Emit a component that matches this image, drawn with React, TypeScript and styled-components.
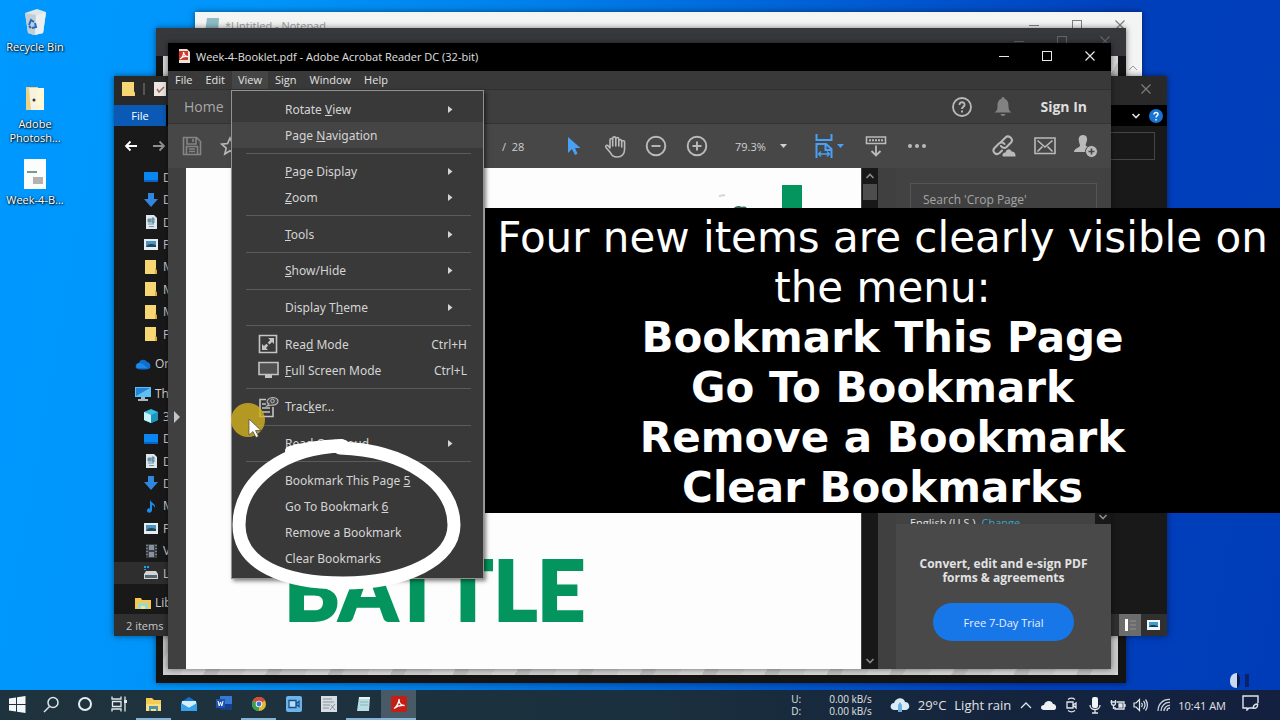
import React from 'react';
import styled, { createGlobalStyle } from 'styled-components';

const GlobalStyle = createGlobalStyle`
  * {
    box-sizing: border-box;
  }
  body {
    margin: 0;
    font-family: "Open Sans", "Noto Sans", sans-serif;
    font-size: 12px;
    color: #e2e2e2;
  }
  button, input, select {
    font-family: inherit;
    font-size: inherit;
    color: inherit;
    background: none;
    border: none;
    padding: 0;
    margin: 0;
  }
`;

const Screen = styled.div`
  height: 100vh;
  display: flex;
  flex-direction: column;
  overflow: hidden;
  background: linear-gradient(100deg, #0099ff 0%, #0095fa 18%, #0080ea 38%, #0057cf 64%, #0040bd 80%, #003cb8 100%);
`;

const Desktop = styled.main`
  flex: 1;
  position: relative;
`;

const Shortcuts = styled.div`
  display: flex;
  flex-direction: column;
  width: 70px;
  padding-top: 8px;
`;

const Shortcut = styled.button<{ $gap?: number }>`
  display: flex;
  flex-direction: column;
  align-items: center;
  gap: 4px;
  margin-bottom: ${(p) => p.$gap || 0}px;
  font-size: 11px;
  line-height: 14px;
  color: #fff;
  text-shadow: 1px 1px 2px #000, 0 0 2px #000;
`;

/* windows */

const Win = styled.section<{ $top: number; $right: number; $bottom: number; $left: number; $bg: string }>`
  position: absolute;
  top: ${(p) => p.$top}px;
  right: ${(p) => p.$right}px;
  bottom: ${(p) => p.$bottom}px;
  left: ${(p) => p.$left}px;
  display: flex;
  flex-direction: column;
  background: ${(p) => p.$bg};
  box-shadow: 0 0 6px rgba(0, 0, 0, 0.5);
`;

const NotepadTitle = styled.div`
  display: flex;
  align-items: center;
  gap: 6px;
  height: 26px;
  padding: 0 1px 0 10px;
  background: #f3f4f4;
  color: #9a9a9a;
  font-size: 11px;
`;

const NotepadEdge = styled.div`
  display: flex;
  justify-content: flex-end;
  padding: 26px 4px;
`;

const Push = styled.div`
  flex: 1;
`;

const WinButtons = styled.div<{ $color: string }>`
  display: flex;
  color: ${(p) => p.$color};
  button {
    width: 43px;
    height: 26px;
    display: flex;
    align-items: center;
    justify-content: center;
  }
`;

const PhotoTitle = styled.div`
  display: flex;
  justify-content: flex-end;
  height: 28px;
  background: #36383b;
`;

const PhotoCanvas = styled.div`
  flex: 1;
  margin: 0 8px 8px 7px;
  background: repeating-linear-gradient(120deg, #d6d6d6 0 20px, #bdbdbd 20px 32px, #cccccc 32px 54px);
`;

const ExplorerTitle = styled.div`
  display: flex;
  align-items: center;
  gap: 8px;
  height: 29px;
  padding: 0 0 3px 8px;
  background: #292929;
`;

const Ribbon = styled.div`
  display: flex;
  align-items: center;
  height: 21px;
  padding-right: 3px;
  gap: 7px;
  background: #000;
`;

const FileTab = styled.button`
  width: 52px;
  height: 21px;
  background: #0a59b5;
  color: #fff;
  font-size: 11px;
`;

const AddressRow = styled.div`
  display: flex;
  align-items: center;
  gap: 12px;
  height: 40px;
  padding: 0 12px 0 9px;
`;

const AddressInput = styled.input`
  width: 120px;
  height: 28px;
  border: 1px solid #454545;
`;

const NavTree = styled.nav`
  flex: 1;
  width: 200px;
  display: flex;
  flex-direction: column;
`;

const NavRow = styled.button<{ $depth: number; $active?: boolean }>`
  flex: 3;
  display: flex;
  align-items: center;
  gap: 4px;
  padding-left: ${(p) => (p.$depth ? 29 : 21)}px;
  background: ${(p) => (p.$active ? '#2e2e2e' : 'transparent')};
  color: #d0d0d0;
  font-size: 12px;
  white-space: nowrap;
`;

const NavGap = styled.div`
  flex: 1;
`;

const StatusBar = styled.div`
  display: flex;
  align-items: center;
  height: 22px;
  padding: 0 2px 0 12px;
  background: #303030;
  color: #c8c8c8;
  font-size: 11px;
`;

const ViewButton = styled.button<{ $active?: boolean }>`
  width: 22px;
  height: 22px;
  display: flex;
  align-items: center;
  justify-content: center;
  margin-left: 2px;
  background: ${(p) => (p.$active ? '#6c6c6c' : 'transparent')};
`;

/* acrobat */

const TitleBar = styled.header`
  display: flex;
  align-items: center;
  gap: 5px;
  height: 28px;
  padding: 0 0 2px 9px;
  background: #000;
  font-size: 11px;
  color: #e0e0e0;
`;

const MenuBar = styled.div`
  display: flex;
  gap: 1px;
  height: 19px;
  padding-left: 1px;
  background: #393939;
  border-bottom: 1px solid #303030;
`;

const MenuBarItem = styled.button<{ $active?: boolean }>`
  padding: 0 6px;
  font-size: 11px;
  line-height: 18px;
  background: ${(p) => (p.$active ? '#454545' : 'transparent')};
`;

const TabRow = styled.div`
  display: flex;
  align-items: center;
  height: 34px;
  padding: 0 24px 0 16px;
  background: #3e3e3e;
  border-bottom: 1px solid #333;
`;

const HomeTab = styled.button`
  font-size: 14px;
  color: #a8a8a8;
`;

const SignIn = styled.button`
  margin-left: 25px;
  font-size: 14px;
  font-weight: 700;
  color: #dedede;
`;

const Toolbar = styled.div`
  display: flex;
  align-items: center;
  height: 44px;
  padding: 0 13px 0 12px;
  background: #474747;
`;

const ToolGroup = styled.div<{ $before?: number }>`
  display: flex;
  align-items: center;
  gap: 17px;
  margin-left: ${(p) => (p.$before ? p.$before + 'px' : 'auto')};
`;

const ToolButton = styled.button<{ $color?: string; $wide?: boolean }>`
  width: ${(p) => (p.$wide ? 36 : 24)}px;
  height: 28px;
  display: flex;
  align-items: center;
  justify-content: center;
  gap: 4px;
  color: ${(p) => p.$color || '#bababa'};
`;

const PageCount = styled.span`
  width: 24px;
  margin-left: 260px;
  font-size: 11px;
  color: #d0d0d0;
  white-space: pre;
`;

const ZoomField = styled.label`
  display: flex;
  align-items: center;
  width: 60px;
  margin: 0 16px 0 26px;
  font-size: 11px;
  color: #d0d0d0;
  select {
    appearance: none;
    width: 45px;
  }
`;

const Body = styled.div`
  flex: 1;
  display: flex;
  min-height: 0;
  background: #404040;
`;

const PaneHandle = styled.button`
  width: 18px;
  color: #c4c4c4;
`;

const Page = styled.article`
  flex: 1;
  display: flex;
  flex-direction: column;
  justify-content: space-between;
  padding: 17px 0 50px 98px;
  background: #fdfdfd;
`;

const PageArt = styled.svg`
  align-self: flex-end;
  margin-right: 57px;
`;

const Headline = styled.h1`
  margin: 0;
  font-family: Lato, sans-serif;
  font-size: 84px;
  line-height: 60px;
  font-weight: 900;
  color: #04955e;
  -webkit-text-stroke: 2px #04955e;
`;

const ScrollTrack = styled.div`
  width: 16px;
  display: flex;
  flex-direction: column;
  align-items: center;
  justify-content: space-between;
  margin-left: 1px;
  background: #181818;
  color: #8c8c8c;
`;

const ScrollTop = styled.div`
  display: flex;
  flex-direction: column;
  align-items: center;
`;

const ScrollButton = styled.button`
  width: 16px;
  height: 16px;
  display: flex;
  align-items: center;
  justify-content: center;
  color: #8c8c8c;
`;

const ScrollThumb = styled.div`
  width: 14px;
  height: 16px;
  background: #4d4d4d;
`;

const SidePanel = styled.aside`
  width: 215px;
  margin-left: 18px;
  display: flex;
  flex-direction: column;
  background: #484848;
`;

const PanelScroll = styled.div`
  flex: 1;
  display: flex;
  flex-direction: column;
  justify-content: space-between;
  overflow: hidden;
  padding: 15px 14px 0 14px;
  background: #424242;
`;

const SearchInput = styled.input`
  height: 32px;
  padding: 0 12px;
  border: 1px solid #555;
  background: #404040;
  &::placeholder {
    color: #a6a6a6;
    opacity: 1;
  }
`;

const Language = styled.div`
  display: flex;
  gap: 6px;
  height: 8px;
  font-size: 11px;
  line-height: 14px;
  white-space: nowrap;
  a {
    color: #38a5c9;
    text-decoration: none;
  }
`;

const PanelArrow = styled.div`
  flex: 1;
  display: flex;
  justify-content: flex-end;
  margin-right: -14px;
  margin-top: -7px;
  button {
    background: #181818;
  }
`;

const Promo = styled.div`
  display: flex;
  flex-direction: column;
  align-items: center;
  height: 145px;
  padding-top: 33px;
  line-height: 14px;
  text-align: center;
  background: #494949;
`;

const PromoText = styled.p`
  width: 190px;
  margin: 0 0 18px;
  font-weight: 700;
`;

const TrialButton = styled.button`
  width: 141px;
  height: 38px;
  border-radius: 19px;
  background: #1877e8;
  font-size: 11px;
  color: #e8f0fa;
`;

const Menu = styled.div`
  position: absolute;
  left: 63px;
  top: 47px;
  width: 253px;
  height: 489px;
  display: flex;
  flex-direction: column;
  padding: 5px 0 7px;
  background: #393939;
  border: 1px solid #929292;
  box-shadow: 2px 2px 4px rgba(0, 0, 0, 0.5);
`;

const MenuItem = styled.button<{ $hover?: boolean }>`
  display: grid;
  grid-template-columns: 20px 1fr auto;
  column-gap: 7px;
  align-items: center;
  height: 26px;
  padding: 0 16px 0 26px;
  font-family: "Noto Sans", sans-serif;
  font-size: 12px;
  text-align: left;
  white-space: nowrap;
  background: ${(p) => (p.$hover ? '#454545' : 'transparent')};
  color: #d4d4d4;
  svg {
    display: block;
  }
`;

const SubArrow = styled.span`
  display: flex;
  padding-right: 14px;
`;

const Separator = styled.div`
  flex: 1;
  display: flex;
  align-items: center;
  padding: 0 12px 0 14px;
  &::after {
    content: "";
    flex: 1;
    height: 1px;
    background: #5b5b5b;
  }
`;

/* things drawn on top of the windows */

const Pointer = styled.svg`
  position: absolute;
  left: 230px;
  top: 400px;
`;

const Ring = styled.svg`
  position: absolute;
  left: 228px;
  top: 432px;
`;

const Caption = styled.div`
  position: absolute;
  left: 485px;
  right: 0;
  top: 208px;
  padding: 5px 4px 0;
  background: #000;
  color: #fff;
  font-family: "DejaVu Sans", sans-serif;
  font-size: 42px;
  line-height: 50px;
  text-align: center;
  p {
    margin: 0;
  }
`;

const BoldLine = styled.p`
  font-weight: 700;
`;

const Widget = styled.svg`
  position: absolute;
  right: 28px;
  bottom: 0;
`;

/* taskbar */

const Taskbar = styled.footer`
  display: flex;
  align-items: stretch;
  height: 30px;
  position: relative;
  background: linear-gradient(90deg, #1f333e 0%, #1b303e 50%, #14253d 75%, #13203f 100%);
`;

const TaskButton = styled.button<{ $app?: boolean; $open?: boolean; $active?: boolean }>`
  width: ${(p) => (p.$app ? 35 : 34)}px;
  display: flex;
  align-items: center;
  justify-content: center;
  border-bottom: 2px solid ${(p) => (p.$open ? '#86b3d8' : 'transparent')};
  background: ${(p) => (p.$active ? '#485a66' : 'transparent')};
`;

const NetSpeed = styled.div`
  display: grid;
  grid-template-columns: 38px auto;
  align-content: center;
  margin-left: auto;
  margin-right: 18px;
  font-size: 10px;
  line-height: 12px;
  white-space: nowrap;
`;

const Weather = styled.button`
  display: flex;
  align-items: center;
  gap: 8px;
  margin-right: 3px;
  font-size: 13px;
  white-space: nowrap;
`;

const Tray = styled.div`
  display: flex;
  align-items: center;
  button {
    width: 23px;
    height: 30px;
    display: flex;
    align-items: center;
    justify-content: center;
  }
`;

const Clock = styled.time`
  align-self: center;
  margin: 0 9px 0 3px;
  font-size: 11px;
  white-space: nowrap;
`;

const NoticeButton = styled.button`
  width: 30px;
  margin-right: 15px;
`;

const MinimizeIcon = () => (
  <svg width="12" height="12"><path d="M1 6.5h10" stroke="currentColor" /></svg>
);
const MaximizeIcon = () => (
  <svg width="12" height="12"><rect x="1.5" y="1.5" width="9" height="9" fill="none" stroke="currentColor" /></svg>
);
const CloseIcon = () => (
  <svg width="12" height="12"><path d="M1.5 1.5l9 9M10.5 1.5l-9 9" stroke="currentColor" strokeWidth="1.2" /></svg>
);

const Controls = ({ color }: { color: string }) => (
  <WinButtons $color={color}>
    <button aria-label="Minimize"><MinimizeIcon /></button>
    <button aria-label="Maximize"><MaximizeIcon /></button>
    <button aria-label="Close"><CloseIcon /></button>
  </WinButtons>
);

const Chevron = ({ up }: { up?: boolean }) => (
  <svg width="10" height="8" viewBox="0 0 10 8">
    <path d={up ? 'M1.500 6l3.500-3.500 3.500 3.500' : 'M1.500 2l3.500 3.500 3.500-3.500'} fill="none" stroke="currentColor" strokeWidth="1.600" />
  </svg>
);

const Caret = () => (
  <svg width="7" height="4"><path d="M0 0h7l-3.500 4z" fill="currentColor" /></svg>
);

const PdfIcon = () => (
  <svg width="14" height="16" viewBox="0 0 14 16">
    <path d="M2 1h8l3 3v11H2z" fill="#f1dfda" />
    <path d="M2 3h9v9H2z" fill="#cf3a2c" />
    <path d="M3 11c2-1 4-4 3.500-7 .5 3 2 4.500 4.500 4.600-3-.6-6 .4-8 2.400z" fill="none" stroke="#fff" strokeWidth="1.300" />
  </svg>
);

const NavIcon = ({ kind }: { kind: string }) => {
  switch (kind) {
    case 'desktop':
      return <svg width="16" height="16"><path d="M1 3h14v10H1z" fill="#0a86f0" /><path d="M1 11h14v2H1z" fill="#0a62c4" /></svg>;
    case 'download':
      return <svg width="16" height="16"><path d="M5 1h6v6h4l-7 8-7-8h4z" fill="#2f87e0" /></svg>;
    case 'document':
      return (
        <svg width="16" height="16">
          <path d="M3 1h8l3 3v11H3z" fill="#dfe7ea" />
          <path d="M5 5h3v3H5zM9 4h2v5H9zM5 10h6M6 12.500h5" fill="#6c93ab" stroke="#6c93ab" />
        </svg>
      );
    case 'picture':
      return (
        <svg width="16" height="16">
          <path d="M1 3h14v11H1z" fill="#e6edf1" />
          <path d="M3 5h10v6H3z" fill="#4b95c4" />
          <path d="M3 11c3-4 5-3 10-2v2z" fill="#23485c" />
        </svg>
      );
    case 'folder':
      return <svg width="16" height="16"><path d="M2 1h11v9l1 2v3H2z" fill="#f7d774" /><path d="M12 9l2 3v3h-2z" fill="#d9a93c" /></svg>;
    case 'cloud':
      return <svg width="16" height="16"><path d="M1 12c-1-3 1-5 3-5 1-4 6-4 8-1 3 0 4 4 3 6-2 2-12 2-14 0z" fill="#0f6fcf" /><path d="M2 8c2-2 6-1 10 4H2c-1-1-1-3 0-4z" fill="#1b8ae6" /></svg>;
    case 'pc':
      return <svg width="16" height="16"><path d="M0 1h16v10H0z" fill="#5cc0f5" /><path d="M1 2h14L1 10z" fill="#2584d8" /><path d="M6 11h4v2h3v2H3v-2h3z" fill="#a3b8c4" /></svg>;
    case 'cube':
      return <svg width="16" height="16"><path d="M1 4l7-3 7 3v8l-7 3-7-3z" fill="#3bbde0" /><path d="M1 4l7 3v8l-7-3z" fill="#c9f3fa" /><path d="M8 7l7-3v8l-7 3z" fill="#1c94bf" /></svg>;
    case 'music':
      return <svg width="16" height="16"><path d="M7 1c0 4 6 4 5 9-1-3-3-3-3-3v5c0 4-6 3-5 0 .5-1.500 2-2 3-1.500z" fill="#1c8be8" /></svg>;
    case 'video':
      return <svg width="16" height="16"><path d="M3 1h11v14H3z" fill="#3c4148" /><path d="M6 2h5v5H6zM6 9h5v5H6z" fill="#8b91a0" /><path d="M4 2v12M13 2v12" stroke="#b8bcc2" strokeDasharray="1 2" /></svg>;
    case 'disk':
      return <svg width="16" height="16"><path d="M1 9l2-3h10l2 3v5H1z" fill="#cfd6d8" /><path d="M2 10h12v3H2z" fill="#56646c" /><path d="M1 1h2v2H1zM4 1h2v2H4zM1 4h2v1H1z" fill="#20a3e8" /></svg>;
    default:
      return <svg width="16" height="16"><path d="M0 3h6l1 2h9v9H0z" fill="#f3c94f" /><path d="M3 8h10v6H3z" fill="#9bd8cf" /><path d="M6 11h4v3H6z" fill="#f4e39a" /></svg>;
  }
};

type NavEntry = { kind: string; label: string; depth: number; active?: boolean };

const navGroups: NavEntry[][] = [
  [
    { kind: 'desktop', label: 'Desktop', depth: 1 },
    { kind: 'download', label: 'Downloads', depth: 1 },
    { kind: 'document', label: 'Documents', depth: 1 },
    { kind: 'picture', label: 'Pictures', depth: 1 },
    { kind: 'folder', label: 'M', depth: 1 },
    { kind: 'folder', label: 'M', depth: 1 },
    { kind: 'folder', label: 'M', depth: 1 },
    { kind: 'folder', label: 'P', depth: 1 },
  ],
  [{ kind: 'cloud', label: 'OneDrive', depth: 0 }],
  [
    { kind: 'pc', label: 'This PC', depth: 0 },
    { kind: 'cube', label: '3D Objects', depth: 1 },
    { kind: 'desktop', label: 'Desktop', depth: 1 },
    { kind: 'document', label: 'Documents', depth: 1 },
    { kind: 'download', label: 'Downloads', depth: 1 },
    { kind: 'music', label: 'Music', depth: 1 },
    { kind: 'picture', label: 'Pictures', depth: 1 },
    { kind: 'video', label: 'Videos', depth: 1 },
    { kind: 'disk', label: 'Local Disk', depth: 1, active: true },
  ],
  [{ kind: 'library', label: 'Libraries', depth: 0 }],
];

const Explorer = () => (
  <Win $top={76} $right={113} $bottom={54} $left={114} $bg="#191919">
    <ExplorerTitle>
      <svg width="13" height="16"><path d="M0 1h12v9l1 2v3H0z" fill="#f7d774" /></svg>
      <svg width="2" height="12"><path d="M1 0v12" stroke="#555" strokeWidth="2" /></svg>
      <svg width="13" height="16"><path d="M1 1h12v14H1z" fill="#ece6e2" /><path d="M4 8l2 3 5-5" fill="none" stroke="#a5695c" strokeWidth="1.500" /></svg>
      <Push />
      <WinButtons $color="#7d7d7d">
        <button aria-label="Close"><CloseIcon /></button>
      </WinButtons>
    </ExplorerTitle>
    <Ribbon>
      <FileTab>File</FileTab>
      <Push />
      <Chevron />
      <svg width="16" height="16">
        <circle cx="8" cy="8" r="7" fill="#1673d1" />
        <path d="M6 6.500c0-3 4.500-2.500 4 0-.3 1.200-2 1.200-2 3M8 11v1.500" fill="none" stroke="#fff" strokeWidth="1.400" />
      </svg>
    </Ribbon>
    <AddressRow>
      <svg width="16" height="14"><path d="M14 7H3M7.500 2.500L3 7l4.500 4.500" fill="none" stroke="#fff" strokeWidth="1.800" /></svg>
      <svg width="16" height="14"><path d="M2 7h11M8.500 2.500L13 7l-4.500 4.500" fill="none" stroke="#909090" strokeWidth="1.800" /></svg>
      <Push />
      <AddressInput aria-label="Search files" />
    </AddressRow>
    <NavTree>
      {navGroups.map((group, g) => (
        <React.Fragment key={g}>
          {g > 0 && <NavGap />}
          {group.map((entry, i) => (
            <NavRow key={i} $depth={entry.depth} $active={entry.active}>
              <NavIcon kind={entry.kind} />
              {entry.label}
            </NavRow>
          ))}
        </React.Fragment>
      ))}
    </NavTree>
    <StatusBar>
      2 items
      <Push />
      <ViewButton $active aria-label="Details view">
        <svg width="14" height="12"><path d="M2 0h3v12H2z" fill="#fff" /><path d="M7 2h6M7 6h6M7 10h6" stroke="#8f8f8f" /></svg>
      </ViewButton>
      <ViewButton aria-label="Thumbnail view">
        <svg width="14" height="12"><path d="M0 1h13v10H0z" fill="#f1f5f7" /><path d="M2 3h9v5H2z" fill="#3f9bd0" /><path d="M2 8c2-3 5-2 9-1v1z" fill="#143b50" /></svg>
      </ViewButton>
    </StatusBar>
  </Win>
);

/* "_" comes before the underlined access key */
type Entry = { text: string; keys?: string; sub?: boolean; hover?: boolean; icon?: React.ReactNode };

const readIcon = (
  <svg width="20" height="20" viewBox="0 0 20 20">
    <path d="M1.500 1.500h17v17h-17z" fill="none" stroke="#c4c4c4" strokeWidth="1.600" />
    <path d="M10 4h6v6l-2-2-2.500 2.500-1.800-1.800L12.200 6zM10 16H4v-6l2 2 2.300-2.300 1.900 1.900L8 14z" fill="#c4c4c4" />
  </svg>
);
const screenIcon = (
  <svg width="21" height="18" viewBox="0 0 21 18">
    <path d="M1 1.500h19v12H1z" fill="#505050" stroke="#c4c4c4" strokeWidth="1.600" />
    <path d="M7 14h7v3H7z" fill="#c4c4c4" />
  </svg>
);
const trackerIcon = (
  <svg width="21" height="22" viewBox="0 0 21 22">
    <path d="M8 3.500H2v17h13V11" fill="none" stroke="#c4c4c4" strokeWidth="1.600" />
    <path d="M4 8h4M4 12h8M4 16h8" stroke="#c4c4c4" strokeWidth="1.400" />
    <path d="M9 10l2-2c-4-2-1-6 3-6.500 4 0 6 2 6 4s-3 4-6 3.500z" fill="#484848" stroke="#b8b8b8" strokeWidth="1.200" />
    <circle cx="14.500" cy="5" r="1.800" fill="none" stroke="#b8b8b8" />
  </svg>
);

const menuGroups: Entry[][] = [
  [{ text: 'Rotate _View', sub: true }, { text: 'Page _Navigation', hover: true }],
  [{ text: '_Page Display', sub: true }, { text: '_Zoom', sub: true }],
  [{ text: '_Tools', sub: true }],
  [{ text: '_Show/Hide', sub: true }],
  [{ text: 'Display T_heme', sub: true }],
  [
    { text: 'Rea_d Mode', keys: 'Ctrl+H', icon: readIcon },
    { text: '_Full Screen Mode', keys: 'Ctrl+L', icon: screenIcon },
  ],
  [{ text: 'Trac_ker...', icon: trackerIcon }],
  [{ text: 'Read _Out Loud', sub: true }],
  [{ text: 'Bookmark This Page _5' }, { text: 'Go To Bookmark _6' }, { text: 'Remove a Bookmark' }, { text: 'Clear Bookmarks' }],
];

const Label = ({ text }: { text: string }) => {
  const at = text.indexOf('_');
  if (at < 0) {
    return <span>{text}</span>;
  }
  return (
    <span>
      {text.slice(0, at)}
      <u>{text[at + 1]}</u>
      {text.slice(at + 2)}
    </span>
  );
};

const ViewMenu = () => (
  <Menu role="menu">
    {menuGroups.map((group, g) => (
      <React.Fragment key={g}>
        {g > 0 && <Separator />}
        {group.map((item) => (
          <MenuItem key={item.text} role="menuitem" $hover={item.hover}>
            <span>{item.icon}</span>
            <Label text={item.text} />
            {item.sub ? (
              <SubArrow>
                <svg width="5" height="7"><path d="M0 0l4.500 3.500L0 7z" fill="#d4d4d4" /></svg>
              </SubArrow>
            ) : (
              <span>{item.keys}</span>
            )}
          </MenuItem>
        ))}
      </React.Fragment>
    ))}
  </Menu>
);

const AcrobatToolbar = () => (
  <Toolbar>
    <ToolButton aria-label="Save" $color="#858585">
      <svg width="20" height="20" viewBox="0 0 20 20" fill="none" stroke="currentColor" strokeWidth="1.600">
        <path d="M1.500 1.500h13l4 4v13h-17zM5 1.500V8h9V1.500M11 3v3M4.500 18.500v-8h11v8M7 13h6M7 15.500h6" />
      </svg>
    </ToolButton>
    <ToolGroup $before={14}>
      <ToolButton aria-label="Favorites">
        <svg width="20" height="20" viewBox="0 0 20 20">
          <path d="M10 2l2.400 5.600 6 .5-4.600 4 1.400 5.900L10 14.800 4.800 18l1.400-5.900-4.600-4 6-.5z" fill="none" stroke="currentColor" strokeWidth="1.600" />
        </svg>
      </ToolButton>
    </ToolGroup>
    <PageCount>/  28</PageCount>
    <ToolGroup $before={36}>
      <ToolButton aria-label="Select" $color="#4aa0f5">
        <svg width="14" height="20"><path d="M1 1v16l4-4 3 6 2.500-1.300L8 12h5.500z" fill="currentColor" /></svg>
      </ToolButton>
      <ToolButton aria-label="Hand">
        <svg width="23" height="23" viewBox="0 0 23 23" fill="none" stroke="currentColor" strokeWidth="1.600" strokeLinecap="round" strokeLinejoin="round">
          <path d="M6 13V5c0-2 2.700-2 2.700 0v-1.500c0-2.200 3.100-2.200 3.100 0V4c0-2 3-2 3 0v2c0-2 2.900-1.800 2.900.3 0 0 2.900-1.700 2.900.7V14c0 5-3 8-7.300 8-4.500 0-5.500-2-7-4.500L2 12.500c-1-2 1-3 2.300-1.500zM8.700 5v6M11.800 4v7M14.800 5v6M17.700 7v5" />
        </svg>
      </ToolButton>
      <ToolButton aria-label="Zoom out">
        <svg width="22" height="22" fill="none" stroke="currentColor" strokeWidth="1.900"><circle cx="11" cy="11" r="9.300" /><path d="M6.500 11h9" /></svg>
      </ToolButton>
      <ToolButton aria-label="Zoom in">
        <svg width="22" height="22" fill="none" stroke="currentColor" strokeWidth="1.900"><circle cx="11" cy="11" r="9.300" /><path d="M6.500 11h9M11 6.500v9" /></svg>
      </ToolButton>
    </ToolGroup>
    <ZoomField>
      <select aria-label="Zoom level" defaultValue="79.3%"><option>79.3%</option></select>
      <Caret />
    </ZoomField>
    <ToolButton $wide $color="#4aa0f5" aria-label="Fit width">
      <svg width="18" height="24" viewBox="0 0 18 24" fill="none" stroke="currentColor" strokeWidth="2">
        <path d="M1.500 0v6h15V0M1.500 24V10h9.500l5.500 5v9M10.500 10v6h6" />
        <path d="M4 20h10M6 17.500L3.500 20 6 22.500M12 17.500l2.500 2.500-2.500 2.500" strokeWidth="1.300" />
      </svg>
      <Caret />
    </ToolButton>
    <ToolGroup $before={17}>
      <ToolButton aria-label="Reading controls">
        <svg width="22" height="22" viewBox="0 0 22 22" fill="none" stroke="currentColor" strokeWidth="1.600">
          <path d="M1.500 2h19v6.500h-19z" /><path d="M4 5.200h14" strokeWidth="2" strokeDasharray="2 1" />
          <path d="M11 10.500v9.500M6.500 16l4.500 4.500 4.500-4.500" strokeWidth="1.800" />
        </svg>
      </ToolButton>
      <ToolButton aria-label="More tools">
        <svg width="18" height="4" fill="currentColor"><circle cx="2" cy="2" r="2" /><circle cx="9" cy="2" r="2" /><circle cx="16" cy="2" r="2" /></svg>
      </ToolButton>
    </ToolGroup>
    <ToolGroup>
      <ToolButton aria-label="Share link">
        <svg width="24" height="22" viewBox="0 0 24 22">
          <g fill="none" stroke="currentColor" strokeWidth="2" strokeLinecap="round">
            <path d="M9 7l4.500-4.500c3-3 8.500 1.500 5.500 5l-4.500 4.500c-1.500 1.500-4.500 1-5.500-1" />
            <path d="M12.500 9c-1.500-2-4-2-5.500-.5L2.500 13c-3 3.500 1.500 8 5 5l2.500-2.500" />
          </g>
          <path d="M11 21.500c-1.500-2 .5-4 2.500-4 1-4 5-4 6-1 3-.5 4.500 3 4 5z" fill="currentColor" />
        </svg>
      </ToolButton>
      <ToolButton aria-label="Email">
        <svg width="22" height="18" viewBox="0 0 22 18" fill="none" stroke="currentColor" strokeWidth="1.600">
          <path d="M1 1h20v15.500H1zM3.500 3.500L11 10l7.500-6.500M3.500 14.500l5-5M18.500 14.500l-5-5" />
        </svg>
      </ToolButton>
      <ToolButton aria-label="Add people">
        <svg width="24" height="23" viewBox="0 0 24 23">
          <path d="M9 0c3.500 0 4.500 3 4 5.500-.3 2-1.300 3-1.300 4.500 0 2 3.800 1.500 4.300 4L12 17H0c0-4 6-4 6-6.500C6 9 5 8 4.800 5.500 4.400 3 5.500 0 9 0z" fill="currentColor" />
          <circle cx="17.500" cy="16.500" r="6" fill="currentColor" stroke="#474747" />
          <path d="M17.500 13.500v6M14.500 16.500h6" stroke="#474747" strokeWidth="1.600" />
        </svg>
      </ToolButton>
    </ToolGroup>
  </Toolbar>
);

const Acrobat = () => (
  <Win $top={43} $right={169} $bottom={21} $left={168} $bg="#404040">
    <TitleBar>
      <PdfIcon />
      Week-4-Booklet.pdf - Adobe Acrobat Reader DC (32-bit)
      <Push />
      <Controls color="#e8e8e8" />
    </TitleBar>
    <MenuBar>
      {['File', 'Edit', 'View', 'Sign', 'Window', 'Help'].map((name) => (
        <MenuBarItem key={name} $active={name === 'View'}>{name}</MenuBarItem>
      ))}
    </MenuBar>
    <TabRow>
      <HomeTab>Home</HomeTab>
      <ToolGroup>
        <ToolButton aria-label="Help">
          <svg width="22" height="22" fill="none" stroke="currentColor">
            <circle cx="11" cy="11" r="9" strokeWidth="1.800" />
            <path d="M8.500 9c0-4 5.500-3.500 5 0-.3 1.800-2.500 1.700-2.500 4M11 14.500v2" strokeWidth="1.900" />
          </svg>
        </ToolButton>
        <ToolButton aria-label="Notifications" $color="#828282">
          <svg width="18" height="20" viewBox="0 0 18 20">
            <path d="M9 0c1 0 1.500 1 1.500 1.800C14 3 14.500 6 14.500 9c0 4 1 5 3 6.500H.500C2.500 14 3.500 13 3.500 9c0-3 .5-6 4-7.200C7.500 1 8 0 9 0zM6.500 17h5c-.5 2.500-4.500 2.500-5 0z" fill="currentColor" />
          </svg>
        </ToolButton>
      </ToolGroup>
      <SignIn>Sign In</SignIn>
    </TabRow>
    <AcrobatToolbar />
    <Body>
      <PaneHandle aria-label="Show navigation pane">
        <svg width="6" height="12"><path d="M0 0l6 6-6 6z" fill="currentColor" /></svg>
      </PaneHandle>
      <Page>
        <PageArt width="88" height="60">
          <path d="M66 0h20v60H66z" fill="#04955e" />
          <path d="M17 24c2-3 6-4 9-2 3-1 5 0 5 2v6H17z" fill="#33664f" />
          <path d="M3 11l6-1" stroke="#d6d6d6" strokeWidth="2" />
        </PageArt>
        <Headline>BATTLE</Headline>
      </Page>
      <ScrollTrack>
        <ScrollTop>
          <ScrollButton aria-label="Scroll up"><Chevron up /></ScrollButton>
          <ScrollThumb />
        </ScrollTop>
        <ScrollButton aria-label="Scroll down"><Chevron /></ScrollButton>
      </ScrollTrack>
      <SidePanel>
        <PanelScroll>
          <SearchInput aria-label="Search tools" placeholder="Search 'Crop Page'" />
          <Language>
            <span>English (U.S.)</span>
            <a href="#language">Change</a>
            <PanelArrow><ScrollButton aria-label="Scroll panel down"><Chevron /></ScrollButton></PanelArrow>
          </Language>
        </PanelScroll>
        <Promo>
          <PromoText>Convert, edit and e-sign PDF forms &amp; agreements</PromoText>
          <TrialButton>Free 7-Day Trial</TrialButton>
        </Promo>
      </SidePanel>
    </Body>
    <ViewMenu />
  </Win>
);

const TaskbarView = () => (
  <Taskbar>
    <TaskButton aria-label="Start">
      <svg width="17" height="17"><path d="M0 2.500l7-1v6.500H0zM8 1.300L16.500 0v8H8zM0 9h7v6.500l-7-1zM8 9h8.500v8L8 15.700z" fill="#f2f6f8" /></svg>
    </TaskButton>
    <TaskButton aria-label="Search">
      <svg width="17" height="17" fill="none" stroke="#dfe5e8" strokeWidth="1.500"><circle cx="10" cy="6.500" r="5" /><path d="M6.500 10.500L1 16" /></svg>
    </TaskButton>
    <TaskButton aria-label="Cortana">
      <svg width="16" height="16"><circle cx="8" cy="8" r="6" fill="none" stroke="#e8eef0" strokeWidth="2" /></svg>
    </TaskButton>
    <TaskButton aria-label="Task view">
      <svg width="17" height="16" fill="none" stroke="#e3e8ea" strokeWidth="1.300"><path d="M1 .5V3h9V.500M1 15.500V13h9v2.500M1.500 5.500h8.500v5H1.500zM14 .5v15" /><path d="M13 4h3v3h-3z" fill="#e3e8ea" stroke="none" /></svg>
    </TaskButton>
    <TaskButton $app $open aria-label="File Explorer">
      <svg width="17" height="15"><path d="M1 1h6l2 2h7v11H1z" fill="#f3cb55" /><path d="M1 7h15v7H1z" fill="#f9dd80" /><path d="M4 9h9v5h-2v-2H6v2H4z" fill="#4b93a6" /></svg>
    </TaskButton>
    <TaskButton $app aria-label="Mail">
      <svg width="16" height="14"><path d="M0 5l8-5 8 5v9H0z" fill="#1173cf" /><path d="M1 4h14v3l-7 4-7-4z" fill="#d5effa" /><path d="M0 6l8 5 8-5v8H0z" fill="#36a1ec" /></svg>
    </TaskButton>
    <TaskButton $app aria-label="Word">
      <svg width="16" height="16"><path d="M4 0h12v14H4z" fill="#3778d2" /><path d="M4 8h12v6H4z" fill="#173f8a" /><path d="M0 3h9v9H0z" fill="#1a55b4" /><path d="M2 5l1.200 5L4.500 6l1.300 4L7 5" fill="none" stroke="#fff" /></svg>
    </TaskButton>
    <TaskButton $app $open aria-label="Chrome">
      <svg width="16" height="16"><circle cx="8" cy="8" r="7" fill="#e1b92e" /><path d="M8 8L1.900 4.500A7 7 0 0 1 14.100 4.500z" fill="#d9483b" /><path d="M8 8L1.900 4.500A7 7 0 0 0 8 15z" fill="#3c9b55" /><circle cx="8" cy="8" r="3.300" fill="#f1f4f4" /><circle cx="8" cy="8" r="2.400" fill="#3c78d8" /></svg>
    </TaskButton>
    <TaskButton $app aria-label="Meetings">
      <svg width="16" height="16"><rect width="16" height="16" rx="2" fill="#6cb4ec" /><path d="M3 4.500h7v7H3zM10 8l3-2.500v5z" fill="#b4dcfa" stroke="#1c4f86" strokeWidth="1.300" /></svg>
    </TaskButton>
    <TaskButton $app aria-label="Editor">
      <svg width="16" height="16"><path d="M0 0h16v16H0z" fill="#d7dde2" /><path d="M2 3h9M2 6h11M2 9h7M2 12h6M9 14l5-6M10 9l4 5" stroke="#8a949e" /></svg>
    </TaskButton>
    <TaskButton $app $open aria-label="Notepad">
      <svg width="15" height="16"><path d="M3 1h11l-1 14H1z" fill="#b9dde0" /><path d="M3 1h11v2H3z" fill="#e8f2f2" /><path d="M4 6h8M4 9h8" stroke="#86b6bd" /></svg>
    </TaskButton>
    <TaskButton $app $open $active aria-label="Acrobat">
      <svg width="16" height="16"><rect width="16" height="16" rx="2" fill="#c41f14" /><path d="M3 12.500c2-1 5.500-6 5-9.500 0 4 2 6.500 5.500 6.500C10 9 6 10 3 12.500z" fill="none" stroke="#fff" strokeWidth="1.300" /></svg>
    </TaskButton>
    <NetSpeed>
      <span>U:</span><span>0.00 kB/s</span>
      <span>D:</span><span>0.00 kB/s</span>
    </NetSpeed>
    <Weather>
      <svg width="20" height="16"><path d="M4 13c-5-1-4-7 0-7C6 0 14 0 15 5c5 0 6 7 1 8z" fill="#dcecf5" /><path d="M8 8l2-3 2 3v7H8z" fill="#6bb0de" /></svg>
      <span>29°C</span>
      <span>Light rain</span>
    </Weather>
    <Tray>
      <button aria-label="Hidden icons"><svg width="12" height="8" fill="none" stroke="#e0e6ea" strokeWidth="1.300"><path d="M1 7l5-5 5 5" /></svg></button>
      <button aria-label="OneDrive"><svg width="16" height="12"><path d="M3 11c-4 0-4-5 0-5 1-5 8-5 9-1 4 0 4 6 1 6z" fill="#eef2f4" /></svg></button>
      <button aria-label="Camera"><svg width="13" height="16" fill="none" stroke="#e0e6ea" strokeWidth="1.300"><path d="M2 5h6v6H2zM8 8l3-2v5zM3 2.500c2-1.500 5-1.500 7 0M3 13.500c2 1.500 5 1.500 7 0" /></svg></button>
      <button aria-label="Microphone"><svg width="12" height="17"><rect x="3" width="6" height="11" rx="2" fill="#f2f5f6" /><path d="M1 8c0 6 10 6 10 0M6 12v4M3 16h6" fill="none" stroke="#dfe5e8" strokeWidth="1.300" /></svg></button>
      <button aria-label="Battery"><svg width="16" height="14" fill="none" stroke="#e0e6ea" strokeWidth="1.300"><path d="M7 4h7v7H5V9M15 6v3M1.500 2v3c0 3 4 3 4 0V2M.5 4h6M3.500 7v4" /><path d="M9 6h3v3H9z" fill="#e0e6ea" /></svg></button>
      <button aria-label="Volume"><svg width="15" height="14" fill="none" stroke="#e0e6ea" strokeWidth="1.200"><path d="M1 5h2l3.500-3.500v11L3 9H1zM8.500 5c1 1 1 3 0 4M10.500 3c2 2 2 6 0 8M12.500 1.500c2.500 3 2.500 8 0 11" /></svg></button>
      <button aria-label="Network"><svg width="14" height="14" fill="none" stroke="#c9d2da" strokeWidth="1.300"><path d="M1 13C1 6 6 1 13 1.500M4 13c0-5 4-9 9-8.500M7 13c0-3 3-6 6-5.500M10 13c0-2 1-3 3-3" /></svg></button>
    </Tray>
    <Clock>10:41 AM</Clock>
    <NoticeButton aria-label="Notification center">
      <svg width="17" height="16" fill="none" stroke="#e0e6ea" strokeWidth="1.400"><path d="M11 13H7l-2 2v-2H1V1h15v7M11 13c3 1 5-1 4.500-4-3 0-4 1-4.500 4z" /></svg>
    </NoticeButton>
  </Taskbar>
);

const App: React.FC = () => (
  <Screen>
    <GlobalStyle />
    <Desktop>
      <Shortcuts>
        <Shortcut $gap={31}>
          <svg width="26" height="28" viewBox="0 0 26 28">
            <path d="M3 5l12-4 9 3-3 21-9 2-6-2z" fill="#dfe6ea" /><path d="M3 5l11 2 10-3-3 21-9 2-6-2z" fill="#c3cdd4" /><path d="M14 7l10-3-3 21-8 2z" fill="#e9eef0" />
            <path d="M7 17l2-5 3 2M13 15l1 4-4 1M9 20l-2-2" fill="none" stroke="#1d6bc9" strokeWidth="2" />
          </svg>
          Recycle Bin
        </Shortcut>
        <Shortcut $gap={14}>
          <svg width="24" height="28" viewBox="0 0 24 28"><path d="M3 2h12v23H3z" fill="#ecd286" /><path d="M6 3h15v22H8z" fill="#f7f3e0" /><path d="M14 3h7v22h-7z" fill="#fff8d6" /><circle cx="11" cy="15" r="1.500" fill="#333" /></svg>
          <span>Adobe<br />Photosh...</span>
        </Shortcut>
        <Shortcut>
          <svg width="22" height="30"><path d="M0 0h22v30H0z" fill="#fbfcfc" /><path d="M3 13h10" stroke="#6fa08a" strokeWidth="2" /><path d="M9 18h10v7H9z" fill="#b4b2b0" /></svg>
          Week-4-B...
        </Shortcut>
      </Shortcuts>

      <Win $top={12} $right={138} $bottom={100} $left={195} $bg="#f4f4f4">
        <NotepadTitle>
          <svg width="14" height="14"><path d="M2 0h12l-1 14H0z" fill="#8ebcc6" /></svg>
          *Untitled - Notepad
          <Push />
          <Controls color="#7f7f7f" />
        </NotepadTitle>
        <NotepadEdge><svg width="10" height="8" fill="none" stroke="#9a9a9a"><path d="M1 6l4-4 4 4" /></svg></NotepadEdge>
      </Win>
      <Win $top={28} $right={154} $bottom={7} $left={156} $bg="#141414">
        <PhotoTitle><Controls color="#62666a" /></PhotoTitle>
        <PhotoCanvas />
      </Win>
      <Explorer />
      <Acrobat />

      <Pointer width="40" height="40">
        <circle cx="18" cy="20" r="17" fill="#d2b21f" fillOpacity="0.8" />
        <path d="M19 19v16l4-3.500 3 6 2.500-1.200-3-5.800h5.500z" fill="#fff" stroke="#444" strokeWidth="0.700" />
      </Pointer>
      <Ring width="240" height="164" viewBox="228 432 240 164" fill="none" stroke="#fff" strokeLinecap="round">
        <path d="M340 448C405 450 454 483 454 525C454 560 405 583 343 583C285 583 239 565 239 525C239 480 285 447 343 446" strokeWidth="13" />
        <path d="M290 451C305 447 322 445 341 444" strokeWidth="10" />
      </Ring>
      <Caption>
        <p>Four new items are clearly visible on the menu:</p>
        <BoldLine>Bookmark This Page</BoldLine>
        <BoldLine>Go To Bookmark</BoldLine>
        <BoldLine>Remove a Bookmark</BoldLine>
        <BoldLine>Clear Bookmarks</BoldLine>
      </Caption>
      <Widget width="24" height="18">
        <path d="M9 1C4 1 2 5 2 9s2 7 7 7z" fill="#c9d9f2" /><path d="M9 1c4 2 4 13 0 15z" fill="#0c1a44" /><path d="M17 2h4v13h-4z" fill="#0a2368" />
      </Widget>
    </Desktop>
    <TaskbarView />
  </Screen>
);

export default App;
